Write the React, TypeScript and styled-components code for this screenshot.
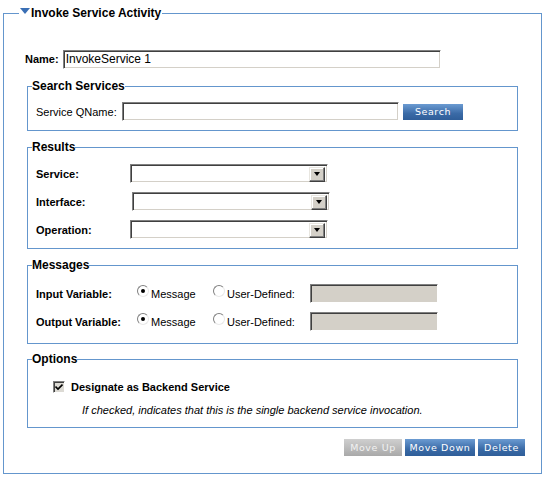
import React from "react";
import styled, { createGlobalStyle } from "styled-components";

const Global = createGlobalStyle`
  html, body { margin: 0; padding: 0; background: #fff; }
  body {
    font-family: "Liberation Sans", Arial, sans-serif;
    font-size: 11px;
    color: #000;
  }
`;

const line = "#6496cd";

const Outer = styled.fieldset`
  box-sizing: border-box;
  width: 539px;
  height: 469px;
  margin: 5px 0 0 3px;
  padding: 0 16px 0 23px;
  border: 1px solid ${line};
  min-width: 0;
`;

const OuterLegend = styled.legend`
  margin-left: -8px;
  padding: 0 1px;
  height: 16px;
  line-height: 16px;
  font-weight: bold;
  font-size: 12px;
  display: flex;
  align-items: center;
  gap: 1px;
`;

const Triangle = styled.span`
  display: inline-block;
  width: 0;
  height: 0;
  border-left: 5px solid transparent;
  border-right: 5px solid transparent;
  border-top: 6px solid #3a6fb5;
  margin-top: -5px;
`;

const Column = styled.div`
  width: 491px;
  display: flex;
  flex-direction: column;
`;

const NameRow = styled.div`
  display: flex;
  align-items: center;
  height: 18px;
  margin: 29px 0 0 -2px;
  gap: 4px;
`;

const BoldLabel = styled.span<{ $w?: number }>`
  font-weight: bold;
  ${(p) => (p.$w ? `width: ${p.$w}px; flex: none;` : "")}
`;

const Label = styled.span<{ $w?: number }>`
  ${(p) => (p.$w ? `width: ${p.$w}px; flex: none;` : "")}
`;

const TextInput = styled.div<{ $w: number; $disabled?: boolean }>`
  box-sizing: border-box;
  width: ${(p) => p.$w}px;
  height: 19px;
  border-top: 1px solid #808080;
  border-left: 1px solid #808080;
  border-bottom: 1px solid #fff;
  border-right: 1px solid #fff;
  box-shadow: inset 1px 1px 0 #404040, inset -1px -1px 0 #d4d0c8;
  background: ${(p) => (p.$disabled ? "#d4d0c8" : "#fff")};
  padding: 0 2px;
  line-height: 17px;
  font-size: 12px;
  white-space: nowrap;
  flex: none;
`;

const Group = styled.fieldset<{ $top: number; $pt: number; $pb: number }>`
  box-sizing: border-box;
  width: 491px;
  margin: ${(p) => p.$top}px 0 0 0;
  padding: ${(p) => p.$pt}px 8px ${(p) => p.$pb}px 8px;
  border: 1px solid ${line};
  min-width: 0;
`;

const GroupLegend = styled.legend`
  margin-left: -4px;
  padding: 0;
  font-weight: bold;
  font-size: 12px;
  line-height: 14px;
`;

const Row = styled.div<{ $gap?: number }>`
  display: flex;
  align-items: center;
  height: 19px;
  margin-top: ${(p) => p.$gap ?? 0}px;
`;

const Button = styled.div<{ $w: number; $h?: number; $gray?: boolean }>`
  box-sizing: border-box;
  width: ${(p) => p.$w}px;
  height: ${(p) => p.$h ?? 16}px;
  line-height: ${(p) => p.$h ?? 16}px;
  text-align: center;
  color: ${(p) => (p.$gray ? "#f2f2f2" : "#fff")};
  font-family: "DejaVu Sans", Verdana, sans-serif;
  font-size: 9.5px;
  letter-spacing: 0.6px;
  background: ${(p) =>
    p.$gray
      ? "linear-gradient(#cfcfcf, #a9a9a9)"
      : "linear-gradient(#6b9bd2, #3a6aa6 60%, #2f5e99)"};
  flex: none;
  cursor: default;
`;

const SelectBox = styled.div<{ $shift?: number }>`
  box-sizing: border-box;
  width: 198px;
  height: 19px;
  margin-left: ${(p) => p.$shift ?? 0}px;
  border-top: 1px solid #808080;
  border-left: 1px solid #808080;
  border-bottom: 1px solid #fff;
  border-right: 1px solid #fff;
  box-shadow: inset 1px 1px 0 #404040, inset -1px -1px 0 #d4d0c8;
  background: #fff;
  display: flex;
  justify-content: flex-end;
  align-items: center;
  padding: 1px 2px 0 0;
  flex: none;
`;

const ArrowBtn = styled.div`
  box-sizing: border-box;
  width: 16px;
  height: 15px;
  background: #d4d0c8;
  border-top: 1px solid #e8e6e0;
  border-left: 1px solid #e8e6e0;
  border-bottom: 1px solid #404040;
  border-right: 1px solid #404040;
  box-shadow: inset -1px -1px 0 #808080, inset 1px 1px 0 #fff;
  display: flex;
  align-items: center;
  justify-content: center;
  &::after {
    content: "";
    width: 0;
    height: 0;
    border-left: 3.5px solid transparent;
    border-right: 3.5px solid transparent;
    border-top: 4px solid #000;
    margin: 0 1px 0 0;
  }
`;

const Radio = styled.span<{ $on?: boolean }>`
  box-sizing: border-box;
  width: 12px;
  height: 12px;
  border-radius: 50%;
  border: 1px solid;
  border-color: #808080 #e8e8e8 #e8e8e8 #808080;
  background: #fff;
  display: inline-flex;
  align-items: center;
  justify-content: center;
  margin: -6px 2px 0 0;
  flex: none;
  &::after {
    content: "";
    width: 4px;
    height: 4px;
    border-radius: 50%;
    background: ${(p) => (p.$on ? "#000" : "transparent")};
  }
`;

const RadioGroup = styled.span<{ $w: number }>`
  display: inline-flex;
  align-items: center;
  width: ${(p) => p.$w}px;
  flex: none;
`;

const CheckRow = styled.div`
  display: flex;
  align-items: center;
  margin: 14px 0 0 17px;
  gap: 6px;
  height: 13px;
`;

const Checkbox = styled.span`
  box-sizing: border-box;
  width: 12px;
  height: 12px;
  border: 1px solid;
  border-color: #808080 #fff #fff #808080;
  box-shadow: inset 1px 1px 0 #404040;
  background: #dcdad4;
  display: inline-flex;
  align-items: center;
  justify-content: center;
`;

const Hint = styled.div`
  margin: 11px 0 0 46px;
  font-style: italic;
  font-size: 11px;
`;

const Actions = styled.div`
  display: flex;
  justify-content: flex-end;
  gap: 3px;
  margin-top: 11px;
  margin-right: -7px;
`;

const Select = ({ shift }: { shift?: number }) => (
  <SelectBox $shift={shift}>
    <ArrowBtn />
  </SelectBox>
);

export default function App() {
  return (
    <>
      <Global />
      <Outer>
        <OuterLegend>
          <Triangle />
          Invoke Service Activity
        </OuterLegend>
        <Column>
          <NameRow>
            <BoldLabel>Name:</BoldLabel>
            <TextInput $w={378}>InvokeService 1</TextInput>
          </NameRow>

          <Group $top={11} $pt={9} $pb={9}>
            <GroupLegend>Search Services</GroupLegend>
            <Row>
              <Label $w={86}>Service QName:</Label>
              <TextInput $w={277} />
              <Button $w={60} style={{ marginLeft: 4 }}>Search</Button>
            </Row>
          </Group>

          <Group $top={9} $pt={10} $pb={9}>
            <GroupLegend>Results</GroupLegend>
            <Row>
              <BoldLabel $w={94}>Service:</BoldLabel>
              <Select />
            </Row>
            <Row $gap={9}>
              <BoldLabel $w={94}>Interface:</BoldLabel>
              <Select shift={2} />
            </Row>
            <Row $gap={9}>
              <BoldLabel $w={94}>Operation:</BoldLabel>
              <Select />
            </Row>
          </Group>

          <Group $top={9} $pt={12} $pb={12}>
            <GroupLegend>Messages</GroupLegend>
            <Row>
              <BoldLabel $w={101}>Input Variable:</BoldLabel>
              <RadioGroup $w={76}>
                <Radio $on />
                Message
              </RadioGroup>
              <RadioGroup $w={97}>
                <Radio />
                User-Defined:
              </RadioGroup>
              <TextInput $w={128} $disabled />
            </Row>
            <Row $gap={9}>
              <BoldLabel $w={101}>Output Variable:</BoldLabel>
              <RadioGroup $w={76}>
                <Radio $on />
                Message
              </RadioGroup>
              <RadioGroup $w={97}>
                <Radio />
                User-Defined:
              </RadioGroup>
              <TextInput $w={128} $disabled />
            </Row>
          </Group>

          <Group $top={8} $pt={0} $pb={11}>
            <GroupLegend>Options</GroupLegend>
            <CheckRow>
              <Checkbox>
                <svg width="8" height="8" viewBox="0 0 8 8">
                  <path d="M0.5 3.5 L3 6 L7.5 1.5" stroke="#000" strokeWidth="1.6" fill="none" />
                </svg>
              </Checkbox>
              <BoldLabel>Designate as Backend Service</BoldLabel>
            </CheckRow>
            <Hint>If checked, indicates that this is the single backend service invocation.</Hint>
          </Group>

          <Actions>
            <Button $w={58} $h={17} $gray>Move Up</Button>
            <Button $w={70} $h={17}>Move Down</Button>
            <Button $w={47} $h={17}>Delete</Button>
          </Actions>
        </Column>
      </Outer>
    </>
  );
}
